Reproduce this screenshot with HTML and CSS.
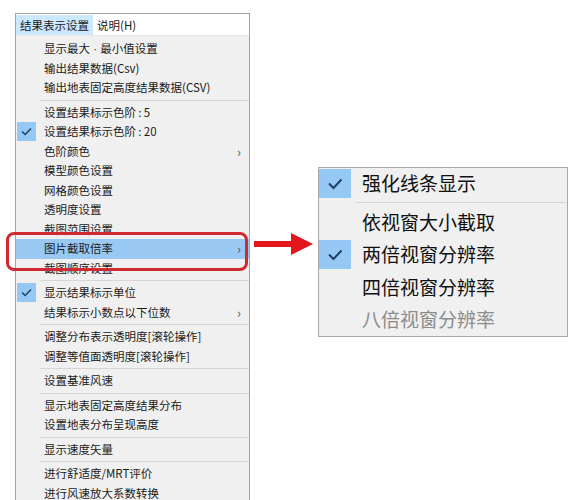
FILE: index.html
```html
<!DOCTYPE html>
<html lang="zh-CN">
<head>
<meta charset="utf-8">
<link rel="stylesheet" href="styles.css">
</head>
<body>
<div class="page">
  <div class="menu">
    <div class="menubar">
      <span class="mb-item active">结果表示设置</span>
      <span class="mb-item">说明(H)</span>
    </div>
    <div class="dropdown">
      <div class="row"><span class="gut"></span><span class="label">显示最大<span class="lat"> · </span>最小值设置</span></div>
      <div class="row"><span class="gut"></span><span class="label">输出结果数据(Csv)</span></div>
      <div class="row"><span class="gut"></span><span class="label">输出地表固定高度结果数据(CSV)</span></div>
      <div class="sep"></div>
      <div class="row"><span class="gut"></span><span class="label">设置结果标示色阶&thinsp;:&thinsp;5</span></div>
      <div class="row"><span class="gut"><span class="chk"><svg viewBox="0 0 19 19" width="19" height="19"><polyline points="5,9.5 8.2,12.6 14,6.4" fill="none" stroke="#1f3f63" stroke-width="1.4"/></svg></span></span><span class="label">设置结果标示色阶&thinsp;:&thinsp;20</span></div>
      <div class="row"><span class="gut"></span><span class="label">色阶颜色</span><span class="more">›</span></div>
      <div class="row"><span class="gut"></span><span class="label">模型颜色设置</span></div>
      <div class="row"><span class="gut"></span><span class="label">网格颜色设置</span></div>
      <div class="row"><span class="gut"></span><span class="label">透明度设置</span></div>
      <div class="row"><span class="gut"></span><span class="label">截图范围设置</span></div>
      <div class="row hl"><span class="gut"></span><span class="label">图片截取倍率</span><span class="more">›</span></div>
      <div class="row"><span class="gut"></span><span class="label">截图顺序设置</span></div>
      <div class="sep"></div>
      <div class="row"><span class="gut"><span class="chk"><svg viewBox="0 0 19 19" width="19" height="19"><polyline points="5,9.5 8.2,12.6 14,6.4" fill="none" stroke="#1f3f63" stroke-width="1.4"/></svg></span></span><span class="label">显示结果标示单位</span></div>
      <div class="row"><span class="gut"></span><span class="label">结果标示小数点以下位数</span><span class="more">›</span></div>
      <div class="sep"></div>
      <div class="row"><span class="gut"></span><span class="label">调整分布表示透明度[滚轮操作]</span></div>
      <div class="row"><span class="gut"></span><span class="label">调整等值面透明度[滚轮操作]</span></div>
      <div class="sep"></div>
      <div class="row"><span class="gut"></span><span class="label">设置基准风速</span></div>
      <div class="sep"></div>
      <div class="row"><span class="gut"></span><span class="label">显示地表固定高度结果分布</span></div>
      <div class="row"><span class="gut"></span><span class="label">设置地表分布呈现高度</span></div>
      <div class="sep"></div>
      <div class="row"><span class="gut"></span><span class="label">显示速度矢量</span></div>
      <div class="sep"></div>
      <div class="row"><span class="gut"></span><span class="label">进行舒适度/MRT评价</span></div>
      <div class="row"><span class="gut"></span><span class="label">进行风速放大系数转换</span></div>
      <div class="row"><span class="gut"></span><span class="label">&nbsp;</span></div>
    </div>
    <div class="callout"></div>
  </div>

  <svg class="arrow" viewBox="0 0 59 22" width="59" height="22">
    <polygon points="0,8 37,8 37,0 59,11 37,22 37,14 0,14" fill="#e3161c"/>
  </svg>

  <div class="submenu">
    <div class="srow first"><span class="sgut"><span class="schk"><svg viewBox="0 0 32 29" width="32" height="29"><polyline points="10,14.5 14.5,19 22.5,10.5" fill="none" stroke="#1f3f63" stroke-width="2"/></svg></span></span><span class="slabel">强化线条显示</span></div>
    <div class="ssep"></div>
    <div class="srow"><span class="sgut"></span><span class="slabel">依视窗大小截取</span></div>
    <div class="srow"><span class="sgut"><span class="schk"><svg viewBox="0 0 32 29" width="32" height="29"><polyline points="10,14.5 14.5,19 22.5,10.5" fill="none" stroke="#1f3f63" stroke-width="2"/></svg></span></span><span class="slabel">两倍视窗分辨率</span></div>
    <div class="srow"><span class="sgut"></span><span class="slabel">四倍视窗分辨率</span></div>
    <div class="srow"><span class="sgut"></span><span class="slabel dis">八倍视窗分辨率</span></div>
  </div>
</div>
</body>
</html>
```

FILE: styles.css
```css
html, body {
  margin: 0;
  padding: 0;
  background: #ffffff;
  height: 500px;
  overflow: hidden;
}

body {
  font-family: "Noto Sans CJK SC", "Noto Sans", sans-serif;
  color: #1b1b1b;
}

.page {
  display: flex;
  align-items: flex-start;
}

.menu {
  position: relative;
  margin-left: 15px;
  margin-top: 13px;
  width: 235px;
  box-sizing: border-box;
  border: 1px solid #a3a3a3;
  border-bottom: none;
}

.menubar {
  display: flex;
  height: 21px;
  background: #ffffff;
}

.mb-item {
  font-size: 11.5px;
  line-height: 20px;
  height: 20px;
  padding: 0 4px;
  margin-top: 1px;
  white-space: nowrap;
}

.mb-item.active {
  background: #cce8ff;
}

.dropdown {
  background: #f0f0f0;
  padding-top: 3px;
  border-top: 1px solid #e8e8e8;
}

.row {
  display: flex;
  align-items: center;
  height: 19.5px;
  font-size: 11.5px;
  line-height: 19.5px;
}

.row.hl {
  background: #99c9f3;
}

.gut {
  width: 27px;
  height: 19.5px;
  display: flex;
  align-items: center;
  padding-left: 1px;
}

.chk {
  display: block;
  width: 19px;
  height: 19px;
  background: #95c8f5;
}

.chk svg {
  display: block;
}

.label {
  flex: 1;
  white-space: nowrap;
}

.lat {
  font-family: "Liberation Sans", sans-serif;
}

.more {
  width: 12px;
  font-size: 13px;
  color: #555555;
  line-height: 19px;
}

.sep {
  height: 5px;
  display: flex;
  align-items: center;
  padding-left: 24px;
}

.sep::after {
  content: "";
  display: block;
  height: 1px;
  flex: 1;
  background: #d6d6d6;
}

.callout {
  position: absolute;
  left: -10px;
  top: 218px;
  width: 242px;
  height: 39px;
  box-sizing: border-box;
  border: 3px solid #cf2a32;
  border-radius: 8px;
}

.arrow {
  display: block;
  margin-left: 4px;
  margin-top: 233px;
}

.submenu {
  margin-left: 5px;
  margin-top: 167px;
  width: 250px;
  box-sizing: border-box;
  border: 1px solid #a8a8a8;
  background: #f0f0f0;
}

.srow {
  display: flex;
  align-items: center;
  height: 32.5px;
}

.srow.first {
  height: 30.5px;
}

.sgut {
  width: 43px;
  height: 100%;
  display: flex;
  align-items: center;
}

.schk {
  display: block;
  width: 32px;
  height: 29px;
  background: #95c8f5;
}

.schk svg {
  display: block;
}

.slabel {
  font-size: 19px;
  line-height: 26px;
  color: #111111;
  white-space: nowrap;
}

.slabel.dis {
  color: #8c8c8c;
}

.ssep {
  height: 7px;
  display: flex;
  align-items: center;
  padding-left: 37px;
  padding-right: 1px;
}

.ssep::after {
  content: "";
  display: block;
  height: 1px;
  flex: 1;
  background: #d3d3d3;
}
```
